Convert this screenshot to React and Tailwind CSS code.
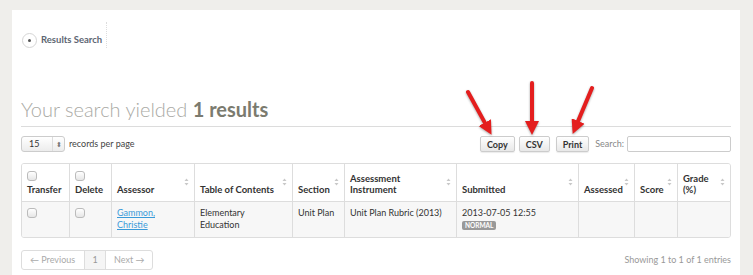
import React from 'react';

const SortIcon = () => (
  <svg width="5" height="8" viewBox="0 0 5 8" className="absolute right-[5px] top-[14px]">
    <path d="M2.5 0.5 L4.5 3 L0.5 3 Z" fill="#c8c8c8" />
    <path d="M2.5 7.5 L4.5 5 L0.5 5 Z" fill="#c8c8c8" />
  </svg>
);

const Check = () => (
  <span className="inline-block w-[10px] h-[10px] rounded-[3px] border border-[#bbb] bg-gradient-to-b from-white to-[#e6e6e6]" />
);

const columns = [
  { key: 'transfer', w: 'w-[47px]', label: 'Transfer', check: true },
  { key: 'delete', w: 'w-[42px]', label: 'Delete', check: true },
  { key: 'assessor', w: 'w-[83px]', label: 'Assessor', sort: true },
  { key: 'toc', w: 'w-[98px]', label: 'Table of Contents', sort: true },
  { key: 'section', w: 'w-[52px]', label: 'Section', sort: true },
  { key: 'instrument', w: 'w-[112px]', label: 'Assessment Instrument', sort: true, wrap: true },
  { key: 'submitted', w: 'w-[122px]', label: 'Submitted', sort: true },
  { key: 'assessed', w: 'w-[56px]', label: 'Assessed', sort: true },
  { key: 'score', w: 'w-[43px]', label: 'Score', sort: true },
  { key: 'grade', w: 'w-[54px]', label: 'Grade (%)', sort: true, wrap: true },
];

const Button = ({ children, className = '' }) => (
  <button className={`h-[16px] px-[6px] rounded-[2px] border border-[#ccc] bg-gradient-to-b from-white to-[#e8e8e8] text-[9px] font-bold text-[#333] leading-none shadow-[0_1px_1px_rgba(0,0,0,0.08)] ${className}`}>
    {children}
  </button>
);

export default function App() {
  return (
    <div className="relative w-[753px] h-[275px] overflow-hidden bg-[#efeeeb] pt-[10px] pl-[12px] pr-[13px]" style={{ fontFamily: 'Lato, "Open Sans", sans-serif' }}>
      <div className="h-full bg-white px-[9px] pt-[12px]">
        {/* breadcrumb */}
        <div className="flex items-end h-[26px]">
          <span className="flex items-center justify-center w-[15px] h-[15px] rounded-full border border-[#d5d5d5] ml-[1px]">
            <span className="w-[3px] h-[3px] rounded-full bg-[#555]" />
          </span>
          <span className="ml-[4px] mb-[2px] text-[9.5px] leading-[12px] font-bold text-[#5d6672]">Results Search</span>
          <span className="ml-[4px] h-[26px] border-l border-dotted border-[#ddd]" />
        </div>

        {/* heading */}
        <h1 className="mt-[49px] text-[20px] leading-[24px] font-light text-[#aaaaa5]">
          Your search yielded <span className="font-bold text-[#7b7b6f]">1 results</span>
        </h1>
        <div className="mt-[5px] border-t border-[#dcdcdc]" />

        {/* controls */}
        <div className="flex items-center h-[16px] mt-[9px]">
          <div className="flex items-center w-[44px] h-[16px] rounded-[3px] border border-[#ccc] bg-gradient-to-b from-white to-[#ececec] text-[9px] text-[#333]">
            <span className="pl-[7px] flex-1">15</span>
            <span className="w-[12px] h-full border-l border-[#ddd] flex items-center justify-center text-[7px] text-[#777]">⬍</span>
          </div>
          <span className="ml-[4px] text-[9px] text-[#444]">records per page</span>
          <div className="flex-1" />
          <Button>Copy</Button>
          <Button className="ml-[4px]">CSV</Button>
          <Button className="ml-[6px]">Print</Button>
          <span className="ml-[6px] text-[9px] text-[#888]">Search:</span>
          <input className="ml-[3px] w-[104px] h-[16px] rounded-[2px] border border-[#ccc] bg-white" />
        </div>

        {/* table */}
        <div className="mt-[11px] rounded-[3px] border border-[#ddd] overflow-hidden">
          <div className="flex h-[37px] bg-white">
            {columns.map((c, i) => (
              <div key={c.key} className={`relative ${c.w} ${i === columns.length - 1 ? 'flex-1' : 'shrink-0'} ${i ? 'border-l border-[#ddd]' : ''} pl-[5px] ${c.wrap ? 'pr-[16px]' : 'pr-[5px]'} flex flex-col justify-end pb-[6px] text-[9.5px] font-bold text-[#333] leading-[11px]`}>
                {c.check && <span className="mb-[1px]"><Check /></span>}
                <span>{c.label}</span>
                {c.sort && <SortIcon />}
              </div>
            ))}
          </div>
          <div className="flex h-[36px] bg-[#f7f7f7] border-t border-[#ddd] text-[9px] text-[#333] leading-[12px]">
            <div className="w-[47px] shrink-0 px-[5px] pt-[6px]"><Check /></div>
            <div className="w-[42px] shrink-0 border-l border-[#ddd] px-[5px] pt-[6px]"><Check /></div>
            <div className="w-[83px] shrink-0 border-l border-[#ddd] px-[5px] pt-[5px]">
              <a href="#" className="text-[#3a9ad9] underline">Gammon,<br />Christie</a>
            </div>
            <div className="w-[98px] shrink-0 border-l border-[#ddd] px-[5px] pt-[5px]">Elementary<br />Education</div>
            <div className="w-[52px] shrink-0 border-l border-[#ddd] px-[5px] pt-[5px]">Unit Plan</div>
            <div className="w-[112px] shrink-0 border-l border-[#ddd] px-[5px] pt-[5px]">Unit Plan Rubric (2013)</div>
            <div className="w-[122px] shrink-0 border-l border-[#ddd] px-[5px] pt-[5px]">
              <div>2013-07-05 12:55</div>
              <span className="inline-block mt-[1px] px-[3px] rounded-[2px] bg-[#999] text-white text-[6.5px] font-bold leading-[9px]">NORMAL</span>
            </div>
            <div className="w-[56px] shrink-0 border-l border-[#ddd]" />
            <div className="w-[43px] shrink-0 border-l border-[#ddd]" />
            <div className="flex-1 border-l border-[#ddd]" />
          </div>
        </div>

        {/* footer */}
        <div className="flex items-center mt-[12px]">
          <div className="flex h-[20px] rounded-[3px] border border-[#ddd] text-[9px] text-[#aaa] overflow-hidden">
            <span className="flex items-center px-[8px] w-[62px]">← Previous</span>
            <span className="flex items-center justify-center w-[21px] bg-[#f5f5f5] border-l border-[#ddd] text-[#999]">1</span>
            <span className="flex items-center px-[8px] border-l border-[#ddd]">Next →</span>
          </div>
          <div className="flex-1" />
          <span className="text-[9px] text-[#999]">Showing 1 to 1 of 1 entries</span>
        </div>
      </div>

      {/* red arrows */}
      <svg className="absolute left-0 top-0 pointer-events-none" width="753" height="275">
        <defs>
          <marker id="ah" viewBox="0 0 10 10" refX="0" refY="5" markerUnits="userSpaceOnUse" markerWidth="14" markerHeight="14" orient="auto">
            <path d="M0 0 L10 5 L0 10 Z" fill="#e41e1e" />
          </marker>
        </defs>
        <g stroke="#e41e1e" strokeWidth="4" strokeLinecap="round" markerEnd="url(#ah)" style={{ filter: 'drop-shadow(0 1px 1px rgba(0,0,0,0.35))' }}>
          <line x1="468" y1="92" x2="484.8" y2="122.6" />
          <line x1="532" y1="83" x2="532" y2="121" />
          <line x1="592" y1="88" x2="578.1" y2="121" />
        </g>
      </svg>
    </div>
  );
}
